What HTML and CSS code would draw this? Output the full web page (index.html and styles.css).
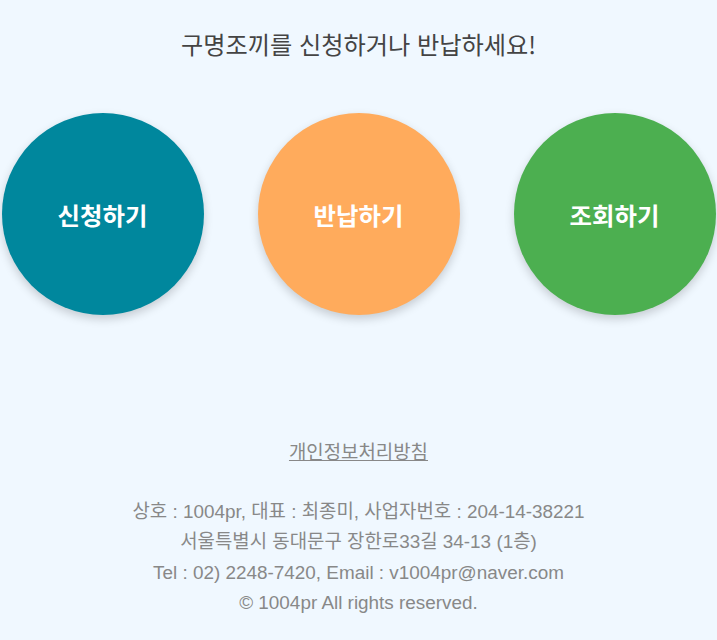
FILE: index.html
```html
<!DOCTYPE html>
<html lang="ko">
<head>
<meta charset="utf-8">
<title>구명조끼</title>
<link rel="stylesheet" href="styles.css">
</head>
<body>
<h1 class="title">구명조끼를 신청하거나 반납하세요!</h1>
<div class="buttons">
  <a class="circle circle-apply" href="#">신청하기</a>
  <a class="circle circle-return" href="#">반납하기</a>
  <a class="circle circle-check" href="#">조회하기</a>
</div>
<footer class="footer">
  <a class="privacy" href="#">개인정보처리방침</a>
  <div class="info">
    <p>상호 : 1004pr, 대표 : 최종미, 사업자번호 : 204-14-38221</p>
    <p>서울특별시 동대문구 장한로33길 34-13 (1층)</p>
    <p>Tel : 02) 2248-7420, Email : v1004pr@naver.com</p>
    <p>© 1004pr All rights reserved.</p>
  </div>
</footer>
</body>
</html>
```
FILE: styles.css
```css
html, body {
  margin: 0;
  padding: 0;
}
body {
  background: #f0f8ff;
  font-family: "Noto Sans CJK KR", "Noto Sans", sans-serif;
  width: 717px;
  min-height: 640px;
}
.title {
  margin: 0;
  padding-top: 26px;
  font-size: 24.2px;
  line-height: 36px;
  font-weight: 400;
  color: #444;
  text-align: center;
}
.buttons {
  margin-top: 51px;
  display: flex;
  justify-content: center;
  gap: 54px;
}
.circle {
  width: 202px;
  height: 202px;
  border-radius: 50%;
  display: flex;
  align-items: center;
  justify-content: center;
  color: #fff;
  font-size: 24.4px;
  font-weight: 700;
  text-decoration: none;
  box-shadow: 0 4px 10px rgba(0, 0, 0, 0.18);
}
.circle-apply { background: #00879d; }
.circle-return { background: #ffab5c; }
.circle-check { background: #4caf50; }
.footer {
  margin-top: 123px;
  text-align: center;
  font-family: "Liberation Sans", "Noto Sans CJK KR", sans-serif;
  font-size: 18.9px;
  line-height: 30px;
  color: #888;
}
.privacy {
  display: inline-block;
  color: #888;
  text-decoration: underline;
  line-height: 30px;
}
.info {
  margin-top: 29px;
}
.info p {
  margin: 0;
  line-height: 30.3px;
}
```
